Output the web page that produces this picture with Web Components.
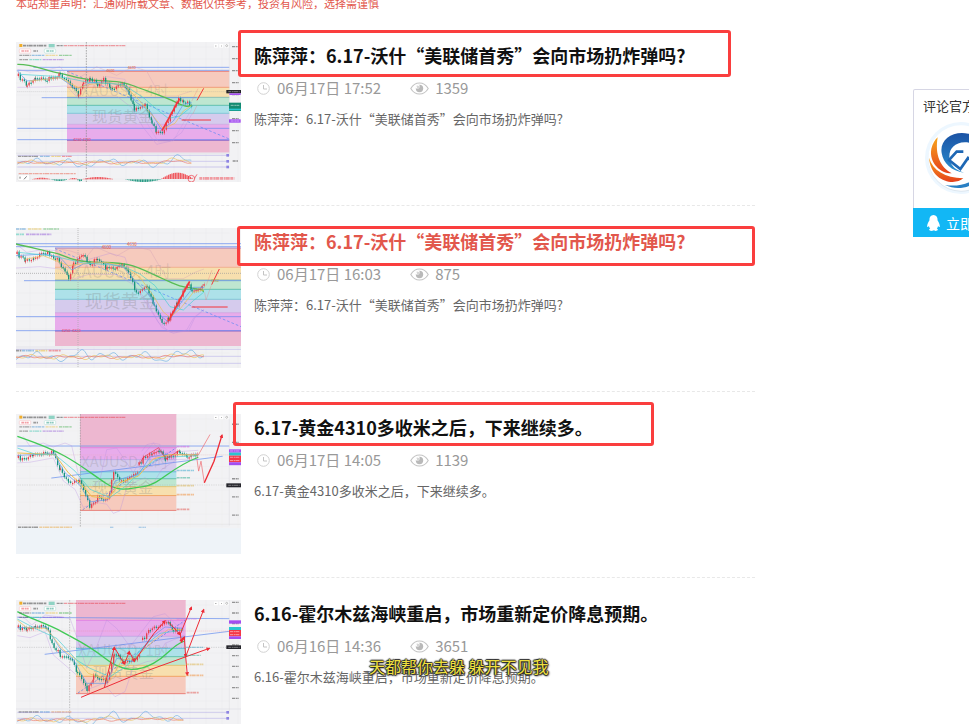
<!DOCTYPE html>
<html lang="zh-CN">
<head>
    <meta charset="UTF-8">
    <meta name="viewport" content="width=device-width, initial-scale=1.0">
    <title>汇通网 - 文章列表</title>
    <style>
        body {
            margin: 0;
            background: #fff;
            font-family: "Noto Sans CJK SC", "Noto Sans", sans-serif;
            overflow-x: hidden;
        }
    </style>
</head>
<body>
    <article-page>
        <site-notice slot="notice">本站郑重声明：汇通网所载文章、数据仅供参考，投资有风险，选择需谨慎</site-notice>

        <article-item date="06月17日 17:52" views="1359">
            <chart-thumb slot="thumb" kind="gold4h"></chart-thumb>
            <a slot="title" href="#a1">陈萍萍：6.17-沃什“美联储首秀”会向市场扔炸弹吗?</a>
            陈萍萍：6.17-沃什“美联储首秀”会向市场扔炸弹吗?
            <mark-box slot="mark" style="--x: 222px; --y: -12px; --w: 493px; --h: 47px"></mark-box>
        </article-item>

        <article-item date="06月17日 16:03" views="875" active>
            <chart-thumb slot="thumb" kind="gold4hZoom"></chart-thumb>
            <a slot="title" href="#a2">陈萍萍：6.17-沃什“美联储首秀”会向市场扔炸弹吗?</a>
            陈萍萍：6.17-沃什“美联储首秀”会向市场扔炸弹吗?
            <mark-box slot="mark" style="--x: 221px; --y: -2px; --w: 518px; --h: 40px"></mark-box>
        </article-item>

        <article-item date="06月17日 14:05" views="1139">
            <chart-thumb slot="thumb" kind="gold1h"></chart-thumb>
            <a slot="title" href="#a3">6.17-黄金4310多收米之后，下来继续多。</a>
            6.17-黄金4310多收米之后，下来继续多。
            <mark-box slot="mark" style="--x: 217px; --y: -12px; --w: 421px; --h: 44px"></mark-box>
        </article-item>

        <article-item date="06月16日 14:36" views="3651">
            <chart-thumb slot="thumb" kind="gold1hArrows"></chart-thumb>
            <a slot="title" href="#a4">6.16-霍尔木兹海峡重启，市场重新定价降息预期。</a>
            6.16-霍尔木兹海峡重启，市场重新定价降息预期。
            <lyric-line slot="mark">天都帮你去躲 躲开不见我</lyric-line>
        </article-item>

        <contact-card slot="side">
            评论官方
            <span slot="action">立即</span>
        </contact-card>
    </article-page>

    <template id="page-tpl">
        <style>
            :host { display: block; padding-left: 16px; }
            .cols { display: grid; grid-template-columns: minmax(0, 1fr) 56px; column-gap: 158px; align-items: start; }
            aside { overflow: hidden; padding-top: 69px; }
        </style>
        <slot name="notice"></slot>
        <div class="cols">
            <main><slot></slot></main>
            <aside><slot name="side"></slot></aside>
        </div>
    </template>

    <template id="notice-tpl">
        <style>
            :host { display: block; margin: -7px 0 7px; color: #e2574c; font-size: 11px; line-height: 20px; }
        </style>
        <slot></slot>
    </template>

    <template id="item-tpl">
        <style>
            :host { display: block; border-bottom: 1px dashed #e8e8e8; padding: 22px 0 23px; }
            article { display: flex; gap: 13px; position: relative; }
            .body { flex: 1; min-width: 0; }
            h2 { margin: 0; font-size: 18px; line-height: 26px; font-weight: 700; }
            ::slotted(a) { color: #111; text-decoration: none; }
            :host([active]) ::slotted(a) { color: #e2574c; }
            .meta { display: flex; align-items: center; margin-top: 10px; padding-left: 3px; color: #999; font-size: 15px; line-height: 20px; }
            .meta svg { flex: none; }
            .clock { margin-right: 7px; }
            .eye { margin: 0 6px 0 29px; }
            p { margin: 11px 0 0; color: #666; font-size: 13px; line-height: 20px; }
        </style>
        <article>
            <slot name="thumb"></slot>
            <div class="body">
                <h2><slot name="title"></slot></h2>
                <div class="meta">
                    <svg class="clock" width="13" height="13" viewBox="0 0 13 13" fill="none" stroke="#d2d2d2">
                        <circle cx="6.5" cy="6.5" r="5.8"/>
                        <path d="M6.5 3v4H10" stroke="#c4c4c4"/>
                    </svg>
                    <time></time>
                    <svg class="eye" width="19" height="13" viewBox="0 0 19 13">
                        <path d="M.8 6.5C5 -.9 14 -.9 18.200 6.500C14 13.900 5 13.900 .8 6.500Z" fill="none" stroke="#c4c4c4" stroke-width="1.100"/>
                        <circle cx="9.500" cy="6.500" r="3.700" fill="#b9b9b9"/>
                        <path d="M5.800 6.500A3.700 3.700 0 0 1 9.500 2.800V5A1.500 1.500 0 0 1 8 6.500Z" fill="#fff"/>
                        <circle cx="8" cy="5" r="1.200" fill="#d6d6d6"/>
                    </svg>
                    <span class="views"></span>
                </div>
                <p><slot></slot></p>
            </div>
            <slot name="mark"></slot>
        </article>
    </template>

    <template id="mark-tpl">
        <style>
            :host {
                position: absolute; left: var(--x); top: var(--y); width: var(--w); height: var(--h);
                box-sizing: border-box; border: 3px solid #fa3e3e; border-radius: 3px; pointer-events: none;
            }
        </style>
    </template>

    <template id="lyric-tpl">
        <style>
            :host { position: absolute; left: 353px; top: 55px; font-size: 16px; line-height: 22px; white-space: nowrap; }
            span {
                color: #f0e040;
                text-shadow: 1px 0 1px #222, -1px 0 1px #222, 0 1px 1px #222, 0 -1px 1px #222, 1px 1px 2px #222;
            }
        </style>
        <span><slot></slot></span>
    </template>

    <template id="contact-tpl">
        <style>
            :host { display: block; width: 112px; box-sizing: border-box; border: 1px solid #d6d6e4; border-bottom: 0; border-radius: 2px; }
            .name { padding: 6px 0 0 9px; color: #333; font-size: 13px; line-height: 20px; }
            .logo { display: block; margin: 6px 0 14px 11px; }
            button {
                display: flex; align-items: center; gap: 6px; width: 112px; height: 29px; margin-left: -1px; padding: 0 0 0 14px;
                border: 0; background: #12b7f5; color: #fff; font: inherit; font-size: 14px; cursor: pointer;
            }
        </style>
        <div class="name"><slot></slot></div>
        <svg class="logo" width="72" height="72" viewBox="75 125 216 216">
            <defs>
                <linearGradient id="or" x1="0" y1="0" x2="0" y2="1"><stop offset="0" stop-color="#f7a51c"/><stop offset="1" stop-color="#e5401c"/></linearGradient>
                <linearGradient id="bl" x1="0" y1="0" x2="0" y2="1"><stop offset="0" stop-color="#1b52a4"/><stop offset="1" stop-color="#2a8fd0"/></linearGradient>
            </defs>
            <circle cx="183" cy="233" r="108" fill="#edf7ff"/>
            <circle cx="183" cy="236" r="98" fill="#dde6ee"/>
            <circle cx="183" cy="233" r="98" fill="#fff"/>
            <path d="M113 171C104 225 122 262 155 279C125 280 86 250 94 205C98 190 105 178 113 171Z" fill="url(#or)"/>
            <path d="M87 232C98 270 135 292 190 294C163 318 93 304 87 232Z" fill="url(#or)"/>
            <path d="M125 218C118 178 158 150 205 160C240 168 262 198 260 235C250 205 225 186 195 186C160 187 144 210 149 238C154 260 172 270 192 277C154 272 130 249 125 218Z" fill="url(#bl)"/>
            <path d="M190 214L170 214L147 239L181 266L204 233L221 247" fill="none" stroke="#1e67b4" stroke-width="8"/>
            <path d="M135 314C190 322 235 300 258 258C252 304 190 341 135 314Z" fill="#2a80c4"/>
        </svg>
        <button type="button">
            <svg width="13" height="16" viewBox="0 0 13 16" fill="#fff">
                <path d="M6.500 0C3.500 0 2.300 2.300 2.400 5.500C1.200 7.300 0 9.500.2 11.800c.5.600 1.200-.2 1.700-.8c.2 1.100.7 1.900 1.300 2.500C2.400 13.900 2 14.500 2.200 15.100C2.700 16.200 5.700 16.100 6.500 15.300C7.300 16.100 10.300 16.200 10.800 15.100C11 14.500 10.600 13.900 9.800 13.500c.6-.6 1.100-1.400 1.300-2.500c.5.600 1.200 1.400 1.700.8C13 9.500 11.800 7.300 10.600 5.500C10.700 2.300 9.500 0 6.500 0Z"/>
            </svg>
            <slot name="action"></slot>
        </button>
    </template>

    <script>
        const stamp = (host, id) => {
            const root = host.attachShadow({ mode: 'open' });
            root.append(document.getElementById(id).content.cloneNode(true));
            return root;
        };

        // elements that only need their template
        const simple = (name, id) => customElements.define(name, class extends HTMLElement {
            constructor() {
                super();
                stamp(this, id);
            }
        });

        class ArticleItem extends HTMLElement {
            constructor() {
                super();
                stamp(this, 'item-tpl');
            }
            connectedCallback() {
                this.shadowRoot.querySelector('time').textContent = this.getAttribute('date');
                this.shadowRoot.querySelector('.views').textContent = this.getAttribute('views');
            }
        }

        // ---- chart drawing helpers, each returns svg markup ----
        const line = (d, color, w = 2, extra = '') => `<path d="${d}" fill="none" stroke="${color}" stroke-width="${w}" ${extra}/>`;
        const poly = (pts, color, w = 2, extra = '') => line('M' + pts, color, w, extra);
        const box = (x, y, w, h, color, extra = '') => `<rect x="${x}" y="${y}" width="${w}" height="${h}" fill="${color}" ${extra}/>`;
        const label = (x, y, size, text, color) => `<text x="${x}" y="${y}" font-size="${size}" fill="${color}">${text}</text>`;
        const dashes = (x, y, w, color, h = 5) => line(`M${x} ${y}h${w}`, color, h, 'stroke-dasharray="9 2 5 1 12 2" opacity=".5"');

        // colour bands between two x positions; rows: [top, fill, line colour]
        function bands(x, right, bottom, rows) {
            return rows.map(([y, fill, edge], i) => {
                const end = i + 1 < rows.length ? rows[i + 1][0] : bottom;
                return box(x, y, right - x, end - y, fill) + line(`M${x} ${y}H${right}`, edge);
            }).join('');
        }

        // candles along a price path, with a fixed pseudo random wobble
        function candles(path, step = 6) {
            let out = '', seed = 7, last = path[0][1];
            const rnd = () => (seed = seed * 16807 % 2147483647) / 2147483647 - 0.5;
            for (let i = 0; i + 1 < path.length; i++) {
                const [x0, y0] = path[i], [x1, y1] = path[i + 1];
                for (let x = x0; x < x1; x += step) {
                    const y = y0 + (y1 - y0) * (x - x0) / (x1 - x0) + rnd() * 14;
                    const color = y < last ? '#e8404c' : '#17937c';
                    const top = Math.min(y, last), h = Math.max(Math.abs(y - last), 4);
                    out += box(x + 1, top - 5, 1, h + 10, color) + box(x - 1, top, 4, h, color);
                    last = y;
                }
            }
            return out;
        }

        function wave(x0, x1, mid, amp, color, phase, bumps) {
            let pts = '';
            for (let x = x0; x <= x1; x += 6) {
                const t = x / 17 + phase;
                const lift = bumps.reduce((s, [c, w, a]) => s + a * Math.exp(-(((x - c) / w) ** 2)), 0);
                pts += `${x},${(mid + amp * (Math.sin(t) + Math.sin(t * 2.3)) / 2 - lift).toFixed(1)} `;
            }
            return poly(pts, color, 2);
        }

        // histogram bars swelling and shrinking over [x0, x1], standing on or hanging from y
        function bars(x0, x1, y, height, color) {
            let out = '';
            for (let x = x0; x < x1; x += 5) {
                const h = height * Math.sin(Math.PI * (x - x0 + 3) / (x1 - x0 + 5));
                out += box(x, height > 0 ? y - h : y, 4, Math.abs(h), color);
            }
            return out;
        }

        function header(y, zoomed) {
            if (zoomed) {
                return dashes(18, y, 30, '#3d8fd0') + dashes(54, y, 42, '#e8c24a') + dashes(100, y, 48, '#59b964') +
                    dashes(18, y + 16, 24, '#3cc5b0') + dashes(48, y + 16, 76, '#9259d8');
            }
            return box(28, y - 5, 9, 9, '#f1ae2b') + dashes(39, y, 70, '#333') + box(116, y - 5, 18, 10, '#8fd3c4') +
                dashes(140, y, 20, '#333', 4) + dashes(162, y, 186, '#e8404c', 4) +
                box(28, y + 10, 34, 12, '#fff', 'stroke="#f6a0a5" rx="3"') + dashes(34, y + 16, 22, '#e8404c') + dashes(70, y + 16, 14, '#444') +
                box(103, y + 10, 34, 12, '#fff', 'stroke="#84cdbd" rx="3"') + dashes(109, y + 16, 22, '#17937c') +
                dashes(28, y + 29, 34, '#555', 4) + dashes(65, y + 29, 38, '#3d8fd0', 4) + dashes(107, y + 29, 36, '#e8c24a', 4) + dashes(147, y + 29, 38, '#3fae4a', 4) +
                dashes(28, y + 42, 26, '#555', 4) + dashes(58, y + 42, 36, '#3cc5b0', 4) + dashes(98, y + 42, 64, '#9259d8', 4) +
                box(612, y - 5, 12, 11, '#fff') + box(628, y - 5, 12, 11, '#fff') + box(644, y - 5, 12, 11, '#fff') +
                box(616, y, 3, 2, '#555') + box(633, y, 2, 2, '#555') + '<circle cx="650" cy="' + y + '" r="3" fill="none" stroke="#555"/>';
        }

        function axis(from, to, gap) {
            let out = line(`M658 ${from - 15}V${to + 20}`, '#d5d5d8', 1);
            for (let y = from; y <= to; y += gap) out += dashes(666, y, 20, '#333', 4);
            return out;
        }

        function grid(top, bottom) {
            let out = '';
            for (let x = 60; x < 690; x += 48) out += line(`M${x} ${top}V${bottom}`, '#e9eaee', 1);
            for (let y = top + 15; y < bottom; y += 36) out += line(`M18 ${y}H658`, '#e9eaee', 1);
            return out;
        }

        const arrow = (pts, w = 3) => poly(pts, '#ee2b35', w, 'marker-end="url(#tip)"');

        const charts = {
            gold4h: {
                box: '18 18 675 420',
                draw: () => grid(18, 438) +
                    bands(171, 658, 350, [[106, '#f6cabd', '#e2544d'], [154, '#f7dfae', '#ee7b54'], [184, '#bee6d0', '#69a8a0'], [208, '#ade1e9', '#30ad93'], [232, '#d5cbed', '#5bbccb'], [265, '#e8aceb', '#c7a0e0'], [313, '#edb7d0', '#763eb8']]) +
                    label(214, 180, 44, 'XAUUSD, 4时', '#7773') + label(246, 259, 46, '现货黄金', '#7774') +
                    line('M70 94H658M22 103H658M95 185H560M22 277H658M22 311H658', '#5d88ee', 2) +
                    line('M171 106L658 309', '#5786f4', 2, 'stroke-dasharray="8 6"') +
                    poly('22,100 60,108 100,105 150,92 180,130 200,180 230,150 290,122 345,130 370,210 410,260 445,318 490,315 515,270 545,220', '#bf9ae0', 1) +
                    poly('22,154 100,153 170,150 205,188 250,180 320,180 365,215 400,275 440,325 480,316 515,290 545,235', '#b58de0', 1) +
                    poly('171,112 200,130 260,92 320,118 370,92 410,105 450,180 500,180 545,165', '#cf9ab5', 1) +
                    line('M22 85C70 84 90 100 140 110S215 132 270 134S340 138 380 153S470 185 500 200S535 212 545 208', '#57bd55', 4) +
                    candles([[24, 120], [50, 148], [75, 124], [110, 132], [150, 115], [180, 140], [205, 178], [220, 140], [240, 124], [262, 150], [280, 130], [300, 158], [335, 145], [350, 160], [372, 218], [405, 205], [425, 260], [438, 290], [456, 288], [480, 240], [505, 190], [520, 200], [545, 203]]) +
                    poly('22,104 50,135 100,130 150,125 200,160 240,140 290,138 340,150 380,200 420,225 455,282 490,255 520,205 545,200', '#5d96ec', 2) +
                    poly('60,135 150,125 205,155 240,145 300,140 345,150 385,190 425,235 460,278 495,262 520,225 545,208', '#edbf50', 2) +
                    poly('30,115 150,122 240,140 340,145 400,185 440,220 475,247 510,240 545,212', '#45cfd3', 2) +
                    line('M456 284L509 188', '#f4333b', 5) + line('M515 252H603M561 193L581 157', '#f4333b', 3) + line('M545 196L564 158M548 235L561 208', '#ef7c80', 1) +
                    label(289, 107, 11, '4600', '#f06030') + label(353, 98, 11, '4630', '#f06030') + label(190, 315, 11, '4250-4240', '#e8405a') +
                    line('M22 167H658', '#999', 1, 'stroke-dasharray="3 3"') + line('M229 18V438', '#888', 2, 'stroke-dasharray="5 3"') +
                    box(18, 350, 640, 4, '#e7e8ec') + dashes(24, 361, 62, '#444', 4) + dashes(90, 361, 30, '#3d8fd0', 4) + dashes(124, 361, 28, '#e8b82a', 4) + dashes(156, 361, 30, '#e8404c', 4) +
                    line('M22 358H658M22 376H658M22 393H658', '#8d84e2', 1) +
                    wave(22, 545, 378, 12, '#6fb2e4', 0, [[210, 20, -15], [420, 20, -12], [510, 28, 12]]) + wave(22, 545, 379, 7, '#efc25c', 1, [[500, 35, 8]]) + wave(22, 545, 380, 4, '#ed7c6c', 2, [[500, 35, 5]]) +
                    dashes(26, 413, 172, '#e8604c', 4) + box(24, 416, 35, 18, '#fff', 'rx="3" stroke="#ccc"') + line('M42 430L50 421M30 422v6', '#333', 2) +
                    bars(66, 120, 430, 5, '#ef5a60') + bars(176, 202, 430, 4, '#ef5a60') + bars(215, 310, 430, 7, '#ef5a60') +
                    bars(122, 172, 430, -5, '#2a9d86') + bars(202, 216, 430, -6, '#2a9d86') + bars(345, 452, 430, -8, '#2a9d86') + bars(454, 548, 429, 19, '#ef5a60') +
                    '<circle cx="544" cy="428" r="10" fill="none" stroke="#ee3440" stroke-width="2"/>' + line('M553 428L561 415', '#ee3440', 2) + dashes(568, 427, 105, '#ef4550', 8) +
                    axis(32, 340, 36) + box(649, 162, 44, 10, '#25252b') + box(658, 172, 34, 5, '#a34df0') + box(657, 200, 36, 25, '#138a72') + box(657, 218, 36, 5, '#2ac6cf') + box(657, 250, 35, 10, '#a34df0') +
                    dashes(662, 208, 26, '#fff', 3) + dashes(662, 255, 26, '#fff', 3) + dashes(655, 167, 34, '#ccc', 3) + dashes(668, 375, 16, '#333', 4) +
                    box(649, 354, 8, 8, '#8d84e2') + box(649, 372, 8, 8, '#8d84e2') + box(649, 389, 8, 8, '#8d84e2') + header(29)
            },
            gold4hZoom: {
                box: '18 12 675 420',
                draw: () => grid(12, 432) +
                    bands(135, 693, 366, [[72, '#f6cabd', '#7e58ba'], [130, '#f7dfae', '#ee9b74'], [168, '#bee6d0', '#69a8a0'], [196, '#ade1e9', '#30ad93'], [226, '#d5cbed', '#5bbccb'], [266, '#e8aceb', '#c7a0e0'], [321, '#edb7d0', '#763eb8']]) +
                    label(186, 162, 50, 'XAUUSD, 4时', '#7773') + label(224, 253, 54, '现货黄金', '#7774') +
                    line('M18 59H693M18 68H693M42 170H693M18 278H693M18 320H693', '#5d88ee', 2) +
                    line('M135 74L693 308', '#5786f4', 2, 'stroke-dasharray="8 6"') +
                    poly('18,60 50,85 100,77 140,80 165,140 200,120 240,105 300,88 345,100 370,180 410,230 445,295 480,325 535,322 555,280 582,258', '#b58de0', 1) +
                    poly('18,132 90,128 150,135 190,165 240,150 320,152 370,182 410,240 455,310 490,328 530,318 552,280 582,256', '#b58de0', 1) +
                    poly('145,74 185,82 230,98 255,68 320,96 370,67 420,78 470,164 520,164 555,145 582,135', '#cf9ab5', 1) +
                    line('M18 60C65 70 90 78 130 86S175 109 230 113S320 114 355 122S415 145 460 165S505 187 550 193S572 202 582 202', '#57bd55', 4) +
                    candles([[20, 90], [45, 110], [70, 102], [100, 85], [135, 100], [158, 130], [175, 160], [190, 118], [218, 94], [240, 120], [262, 105], [290, 135], [335, 125], [355, 145], [378, 206], [410, 185], [432, 248], [455, 298], [475, 285], [500, 240], [530, 180], [545, 195], [582, 187]]) +
                    poly('18,95 100,90 150,100 185,138 220,120 280,115 340,130 375,170 415,210 455,278 475,294 510,240 550,190 582,190', '#5d96ec', 2) +
                    poly('45,106 100,95 175,125 225,118 290,115 345,128 390,160 425,208 460,264 480,280 510,255 550,205 582,198', '#edbf50', 2) +
                    poly('25,85 130,96 220,117 335,125 390,150 435,185 480,248 520,258 550,230 582,204', '#45cfd3', 2) +
                    line('M475 292L539 172', '#f4333b', 5) + line('M545 249H653M605 182L628 135', '#f4333b', 3) + line('M588 185L606 138M588 228L604 184M584 205L588 228', '#ef7c80', 1) +
                    label(275, 74, 13, '4600', '#f06030') + label(351, 65, 13, '4630', '#f06030') + label(155, 325, 12, '4250-4220', '#e8405a') + label(603, 174, 11, '4382', '#b7a43c') +
                    line('M18 148H693', '#999', 2, 'stroke-dasharray="3 3"') + line('M204 12V432', '#aaa', 2, 'stroke-dasharray="3 3"') +
                    box(18, 367, 675, 4, '#e7e8ec') + line('M18 376H693M18 397H693M18 418H693', '#8d84e2', 1) +
                    wave(18, 582, 396, 14, '#6fb2e4', 0, [[170, 20, -15], [215, 20, 15], [455, 20, -12], [545, 28, 15]]) + wave(18, 582, 399, 8, '#efc25c', 1, [[530, 35, 8]]) + wave(18, 582, 399, 5, '#ed7c6c', 2, [[530, 35, 5]]) +
                    dashes(18, 380, 16, '#444') + dashes(36, 380, 36, '#3d8fd0') + dashes(76, 380, 36, '#e8b82a') + dashes(116, 380, 36, '#e8404c') + header(15, true)
            },
            gold1h: {
                box: '18 12 675 424',
                draw: () => grid(12, 355) +
                    bands(210, 499, 304, [[12, '#edb7d0', '#edb7d0'], [114, '#e8aceb', '#db62df'], [150, '#d5cbed', '#b598e0'], [187, '#ade1e9', '#30a3cb'], [208, '#bee6d0', '#30ad93'], [232, '#f7dfae', '#ddb34a'], [259, '#f6cabd', '#ef8b34']]) +
                    line('M210 304H499', '#e2544d') +
                    label(214, 174, 44, 'XAUUSD, 1时', '#7773') + label(246, 250, 46, '现货黄金', '#7774') +
                    line('M22 109H658M124 206L638 140', '#5d88ee', 2) + line('M218 302L499 114', '#4c78e6', 2, 'stroke-dasharray="7 5"') +
                    poly('40,80 60,110 100,100 130,112 165,100 185,108 210,215 235,245 270,210 290,120 320,115 370,190 400,135 430,100 460,130 520,125 565,122', '#b58de0', 1) +
                    poly('22,160 60,158 130,145 160,215 195,240 220,295 260,280 290,285 310,313 330,305 350,235 380,215 405,205 430,222 455,180 500,150 565,148', '#b58de0', 1) +
                    poly('395,125 410,105 430,100 450,104 450,140', '#b58de0', 1) +
                    line('M22 80C70 97 115 112 165 140S240 190 285 220S350 238 400 232S480 175 565 143', '#3fca55', 4) +
                    candles([[24, 145], [42, 150], [70, 132], [130, 130], [150, 182], [175, 215], [208, 215], [238, 290], [262, 268], [292, 272], [310, 190], [340, 218], [385, 185]]) +
                    candles([[386, 165], [400, 145], [425, 130], [446, 120], [465, 148], [510, 125], [530, 138], [565, 134]]) +
                    poly('22,138 130,130 165,190 210,228 240,278 292,272 315,215 345,205 385,196 420,142 460,135 565,134', '#5d96ec', 2) +
                    poly('22,130 135,135 175,190 215,225 245,262 295,268 330,220 385,200 430,148 480,135 565,136', '#edbf50', 3) +
                    poly('22,115 80,135 135,135 195,185 240,240 300,265 350,228 400,175 450,144 565,138', '#45cfd3', 2) +
                    line('M386 168L400 143L446 114L468 148L510 121', '#e8343f', 2) +
                    line('M565 136L600 74M561 150L566 185L573 155L583 220', '#ef6468', 2) + arrow('583,220 612,155 636,76', 4) +
                    dashes(500, 111, 38, '#db62df') + dashes(500, 183, 52, '#30a3cb') + dashes(500, 205, 42, '#30ad93') + dashes(500, 229, 52, '#ddb34a') + dashes(500, 256, 52, '#ef8b34') + dashes(500, 301, 38, '#e2544d') +
                    line('M22 136H658', '#eaa', 1, 'stroke-dasharray="3 3"') + line('M22 227H658', '#aaa', 1, 'stroke-dasharray="4 3"') + line('M211 12V355', '#999', 2, 'stroke-dasharray="5 3"') +
                    dashes(24, 355, 60, '#444', 4) + dashes(88, 355, 98, '#e7a94a', 4) + dashes(300, 355, 12, '#3d8fd0', 3) + dashes(386, 355, 22, '#3d8fd0', 3) + line('M22 346H692', '#d5d5d8', 1) +
                    axis(43, 330, 55) + box(657, 119, 36, 10, '#a34df0') + box(657, 129, 36, 9, '#2ac6cf') + box(657, 138, 36, 20, '#f43848') + box(657, 158, 36, 9, '#a34df0') + box(649, 222, 44, 12, '#25252b') +
                    dashes(660, 124, 28, '#fff', 3) + dashes(660, 143, 28, '#fff', 3) + dashes(660, 153, 28, '#fff', 3) + dashes(655, 228, 34, '#ccc', 3) +
                    header(22) + box(18, 358, 675, 80, '#eef3f8')
            },
            gold1hArrows: {
                box: '18 15 675 420',
                draw: () => grid(15, 435) +
                    bands(198, 527, 296, [[15, '#edb7d0', '#edb7d0'], [76, '#e8aceb', '#db62df'], [124, '#d5cbed', '#b598e0'], [160, '#ade1e9', '#30a3cb'], [185, '#bee6d0', '#30ad93'], [211, '#f7dfae', '#ddb34a'], [244, '#f6cabd', '#ef8b34']]) +
                    line('M198 296H527', '#e2544d') +
                    label(204, 184, 46, 'XAUUSD, 1时', '#7773') + label(248, 248, 46, '现货黄金', '#7774') +
                    line('M22 67L658 71M104 178L658 109', '#5d88ee', 2) + line('M204 294L527 75', '#4c78e6', 2, 'stroke-dasharray="7 5"') +
                    poly('22,65 45,70 65,90 105,60 150,66 180,70 200,125 230,220 262,150 290,75 320,100 360,155 395,110 430,65 465,56 500,90 525,85', '#b58de0', 1) +
                    poly('22,122 60,128 105,110 130,180 165,210 205,245 230,285 280,265 315,305 345,290 370,215 410,200 440,195 465,145 525,120', '#b58de0', 1) +
                    line('M22 50C60 71 110 85 155 110S235 150 285 190S380 232 430 205S480 155 523 138', '#3fca55', 4) +
                    candles([[24, 98], [50, 103], [75, 92], [108, 95], [125, 145], [150, 180], [180, 185], [202, 235], [230, 282], [250, 245], [292, 260], [312, 172], [340, 205], [375, 190], [392, 170]]) +
                    candles([[397, 135], [420, 102], [450, 90], [468, 77], [490, 108], [517, 102]]) +
                    poly('22,98 110,96 150,160 190,193 230,265 290,265 320,190 370,200 420,130 465,96 520,100', '#5d96ec', 2) +
                    poly('22,75 50,98 110,100 155,160 200,195 235,235 300,258 335,195 375,190 430,138 475,103 520,104', '#edbf50', 2) +
                    poly('22,72 75,100 140,130 200,195 240,220 300,245 350,213 400,155 450,115 520,105', '#45cfd3', 2) +
                    arrow('213,307 370,242 598,160') + arrow('283,278 313,157') + arrow('313,157 343,207') + arrow('343,207 358,170') + arrow('358,170 373,199') + arrow('373,199 432,115 465,78') + arrow('475,80 510,119') +
                    arrow('510,119 544,37') + arrow('510,115 515,141') + arrow('515,141 523,126') + arrow('523,126 527,185') + arrow('527,185 581,44') + arrow('527,185 532,240') +
                    dashes(500, 72, 60, '#db62df', 3) + dashes(528, 157, 52, '#30a3cb', 4) + dashes(528, 181, 44, '#30ad93', 4) + dashes(528, 208, 52, '#ddb34a') + dashes(528, 241, 52, '#ef8b34') + dashes(530, 293, 36, '#e2544d') +
                    line('M22 108H658', '#ee7d82', 1, 'stroke-dasharray="3 3"') + line('M22 157H658', '#999', 1, 'stroke-dasharray="4 3"') + line('M179 15V435', '#aaa', 2, 'stroke-dasharray="5 3"') +
                    box(18, 340, 675, 4, '#e7e8ec') + dashes(26, 351, 60, '#444', 4) + dashes(90, 351, 30, '#3d8fd0', 4) + dashes(124, 351, 62, '#e7904a', 4) +
                    line('M22 352H658M22 370H658', '#8d84e2', 1) +
                    wave(22, 520, 373, 12, '#6fb2e4', 0, [[220, 30, -10], [310, 20, 16], [420, 40, 14]]) + wave(22, 520, 375, 7, '#efc25c', 1, [[310, 30, 9], [430, 40, 7]]) + wave(22, 520, 375, 4, '#ed7c6c', 2, [[420, 40, 5]]) +
                    axis(22, 330, 32) + box(657, 76, 36, 10, '#a34df0') + box(657, 96, 36, 9, '#2ac6cf') + box(657, 105, 36, 19, '#f43848') + box(657, 124, 36, 8, '#a34df0') + box(649, 151, 44, 11, '#25252b') +
                    dashes(660, 110, 28, '#fff', 3) + dashes(660, 119, 28, '#fff', 3) + dashes(655, 157, 34, '#ccc', 3) +
                    box(649, 348, 8, 8, '#8d84e2') + box(649, 366, 8, 8, '#8d84e2') + header(25)
            }
        };

        class ChartThumb extends HTMLElement {
            connectedCallback() {
                const chart = charts[this.getAttribute('kind')];
                const [x, y, w, h] = chart.box.split(' ');
                this.attachShadow({ mode: 'open' }).innerHTML = `
                    <style>
                        :host { display: block; flex: none; width: 225px; height: 140px; }
                        svg { display: block; width: 100%; height: 100%; }
                    </style>
                    <svg viewBox="${chart.box}" preserveAspectRatio="none" role="img" aria-label="现货黄金走势图">
                        <defs>
                            <marker id="tip" viewBox="0 0 10 10" refX="7" refY="5" markerWidth="12" markerHeight="12" markerUnits="userSpaceOnUse" orient="auto">
                                <path d="M0 0L10 5L0 10Z" fill="#ee2b35"/>
                            </marker>
                        </defs>
                        ${box(x, y, w, h, '#f2f2f4')}${chart.draw()}
                    </svg>`;
            }
        }

        simple('article-page', 'page-tpl');
        simple('site-notice', 'notice-tpl');
        simple('mark-box', 'mark-tpl');
        simple('lyric-line', 'lyric-tpl');
        simple('contact-card', 'contact-tpl');
        customElements.define('chart-thumb', ChartThumb);
        customElements.define('article-item', ArticleItem);
    </script>
</body>
</html>
